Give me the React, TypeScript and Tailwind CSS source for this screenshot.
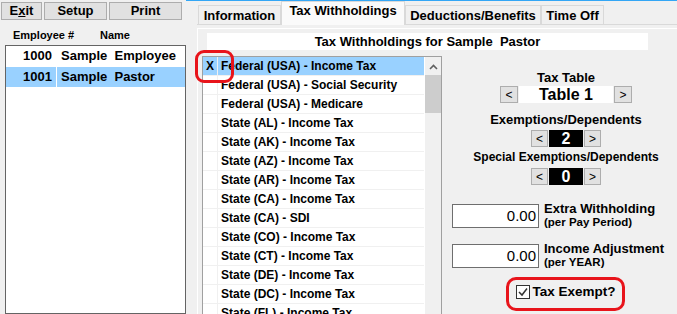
const taxRows = [
  'Federal (USA) - Income Tax',
  'Federal (USA) - Social Security',
  'Federal (USA) - Medicare',
  'State (AL) - Income Tax',
  'State (AK) - Income Tax',
  'State (AZ) - Income Tax',
  'State (AR) - Income Tax',
  'State (CA) - Income Tax',
  'State (CA) - SDI',
  'State (CO) - Income Tax',
  'State (CT) - Income Tax',
  'State (DE) - Income Tax',
  'State (DC) - Income Tax',
  'State (FL) - Income Tax',
  'State (GA) - Income Tax',
];

const employees = [
  { id: '1000', name: 'Sample\u00a0\u00a0Employee', selected: false },
  { id: '1001', name: 'Sample\u00a0\u00a0Pastor', selected: true },
];

const tabs = [
  { label: 'Information', width: 'w-[83px]', active: false },
  { label: 'Tax Withholdings', width: 'w-[124px]', active: true },
  { label: 'Deductions/Benefits', width: 'w-[136px]', active: false },
  { label: 'Time Off', width: 'w-[63px]', active: false },
];

function WinButton({ children, className }: { children: React.ReactNode; className: string }) {
  return (
    <div
      className={`flex items-center justify-center bg-[#e1e1e1] border border-[#adadad] text-black ${className}`}
    >
      {children}
    </div>
  );
}

// small "< value >" stepper used for the tax table and exemption counts
function Stepper({ value, dark }: { value: string; dark?: boolean }) {
  return (
    <div className="flex gap-[1px] h-[17px]">
      <WinButton className={`${dark ? 'w-[17px]' : 'w-[18px]'} h-[17px] text-[12px] font-normal`}>&lt;</WinButton>
      {dark ? (
        <div className="w-[34px] h-[17px] bg-black text-white text-[16px] font-bold leading-[17px] text-center">
          {value}
        </div>
      ) : (
        <div className="w-[94px] h-[17px] bg-white text-black text-[16px] font-bold leading-[17px] text-center">
          {value}
        </div>
      )}
      <WinButton className={`${dark ? 'w-[17px]' : 'w-[18px]'} h-[17px] text-[12px] font-normal`}>&gt;</WinButton>
    </div>
  );
}

function AmountField({ label, sub }: { label: string; sub: string }) {
  return (
    <div className="flex items-start self-start ml-[7px]">
      <div className="w-[87px] h-[24px] bg-white border border-[#6e6e6e] text-right pr-[2px] text-[15px] leading-[22px] text-black">
        0.00
      </div>
      <div className="ml-[5px] -mt-[2px] flex flex-col font-bold text-black">
        <span className="text-[13px] leading-[14px]">{label}</span>
        <span className="text-[11.5px] leading-[13px]">{sub}</span>
      </div>
    </div>
  );
}

export default function App() {
  return (
    <div
      className="relative w-[677px] h-[314px] overflow-hidden bg-[#f0f0f0] flex text-black"
      style={{ fontFamily: '"Liberation Sans", Arial, sans-serif' }}
    >
      {/* Employee picker */}
      <div className="w-[188px] flex flex-col">
        <div className="flex gap-[2px] pl-[1px] pt-[2px] h-[20px] text-[13px] font-bold">
          <WinButton className="w-[41px] h-[18px]">
            <span>
              E<span className="underline">x</span>it
            </span>
          </WinButton>
          <WinButton className="w-[63px] h-[18px]">Setup</WinButton>
          <WinButton className="w-[73px] h-[18px]">Print</WinButton>
        </div>
        <div className="flex items-center h-[25px] pt-[5px] text-[11px] font-bold">
          <span className="pl-[13px] w-[100px]">Employee #</span>
          <span>Name</span>
        </div>
        <div className="ml-[5px] w-[181px] flex-1 border border-[#646464] bg-white">
          {employees.map((e) => (
            <div
              key={e.id}
              className={`flex h-[20px] mb-[1px] text-[13px] font-bold leading-[20px] ${e.selected ? 'bg-[#99d1ff]' : ''}`}
            >
              <span className="w-[50px] text-right pr-[4px]">{e.id}</span>
              <span className="w-[1px] bg-white" />
              <span className="pl-[4px] whitespace-nowrap">{e.name}</span>
            </div>
          ))}
        </div>
      </div>

      {/* Tabbed detail area */}
      <div className="flex-1 flex flex-col border-t border-[#33a6f5]">
        <div className="flex items-end h-[25px] pl-[12px]">
          {tabs.map((t) =>
            t.active ? (
              <div
                key={t.label}
                className={`${t.width} h-[24px] -mb-[1px] relative z-10 bg-[#fafafa] border border-b-0 border-[#d9d9d9] text-[13px] font-bold text-center leading-[18px]`}
              >
                {t.label}
              </div>
            ) : (
              <div
                key={t.label}
                className={`${t.width} h-[19px] bg-[#f0f0f0] border border-b-0 border-[#d9d9d9] text-[13px] font-bold text-center leading-[19px]`}
              >
                {t.label}
              </div>
            ),
          )}
        </div>

        <div className="ml-[11px] flex-1 border-t border-[#d9d9d9] pt-[3px]">
          <div className="h-full border-l border-t border-white pt-[4px]">
            <div className="ml-[9px] w-[441px] h-[17px] bg-white text-center text-[13px] font-bold leading-[17px] whitespace-pre">
              Tax Withholdings for Sample  Pastor
            </div>

            <div className="flex mt-[6px] ml-[4px]">
              {/* withholding list */}
              <div className="w-[240px] h-[262px] border border-[#a0a0a0] flex bg-white">
                <div className="w-[221px] flex flex-col overflow-hidden">
                  {taxRows.map((row, i) => (
                    <div
                      key={row}
                      className={`flex shrink-0 h-[19px] border-b border-[#f0f0f0] text-[12px] font-bold leading-[18px] ${i === 0 ? 'bg-[#99d1ff]' : ''}`}
                    >
                      <span className="w-[14px] text-center">{i === 0 ? 'X' : ''}</span>
                      <span className="w-[1px] bg-[#f0f0f0]" />
                      <span className="pl-[3px] whitespace-nowrap">{row}</span>
                    </div>
                  ))}
                </div>
                <div className="ml-[1px] w-[16px] bg-[#f0f0f0] flex flex-col">
                  <div className="h-[18px] flex items-center justify-center pt-[2px]">
                    <svg width="9" height="6" viewBox="0 0 9 6">
                      <path d="M1 5 L4.5 1.5 L8 5" fill="none" stroke="#606060" strokeWidth="1.6" />
                    </svg>
                  </div>
                  <div className="h-[38px] bg-[#cdcdcd]" />
                </div>
              </div>

              {/* settings column */}
              <div className="w-[242px] ml-[3px] flex flex-col items-center">
                <div className="mt-[14px] text-[13px] font-bold leading-[15px]">Tax Table</div>
                <div className="mt-[1px]">
                  <Stepper value="Table 1" />
                </div>
                <div className="mt-[9px] text-[13px] font-bold leading-[15px]">Exemptions/Dependents</div>
                <div className="mt-[3px]">
                  <Stepper value="2" dark />
                </div>
                <div className="mt-[3px] text-[12px] font-bold leading-[14px] whitespace-nowrap">
                  Special Exemptions/Dependents
                </div>
                <div className="mt-[4px]">
                  <Stepper value="0" dark />
                </div>
                <div className="mt-[19px] self-stretch flex">
                  <AmountField label="Extra Withholding" sub="(per Pay Period)" />
                </div>
                <div className="mt-[15px] self-stretch flex">
                  <AmountField label="Income Adjustment" sub="(per YEAR)" />
                </div>
                <div className="mt-[16px] flex items-center gap-[2px]">
                  <svg width="14" height="14" viewBox="0 0 14 14">
                    <rect x="0.5" y="0.5" width="13" height="13" fill="white" stroke="#333" />
                    <path d="M3 7 L6 10 L11 3.5" fill="none" stroke="#333" strokeWidth="1.5" />
                  </svg>
                  <span className="text-[13.5px] font-bold leading-[14px]">Tax Exempt?</span>
                </div>
              </div>
            </div>
          </div>
        </div>
      </div>

      {/* red call-out marks */}
      <div className="absolute left-[195px] top-[50px] w-[39px] h-[33px] border-[3px] border-[#e8141b] rounded-[9px]" />
      <div className="absolute left-[506px] top-[277px] w-[119px] h-[34px] border-[3px] border-[#e8141b] rounded-[10px]" />
    </div>
  );
}
